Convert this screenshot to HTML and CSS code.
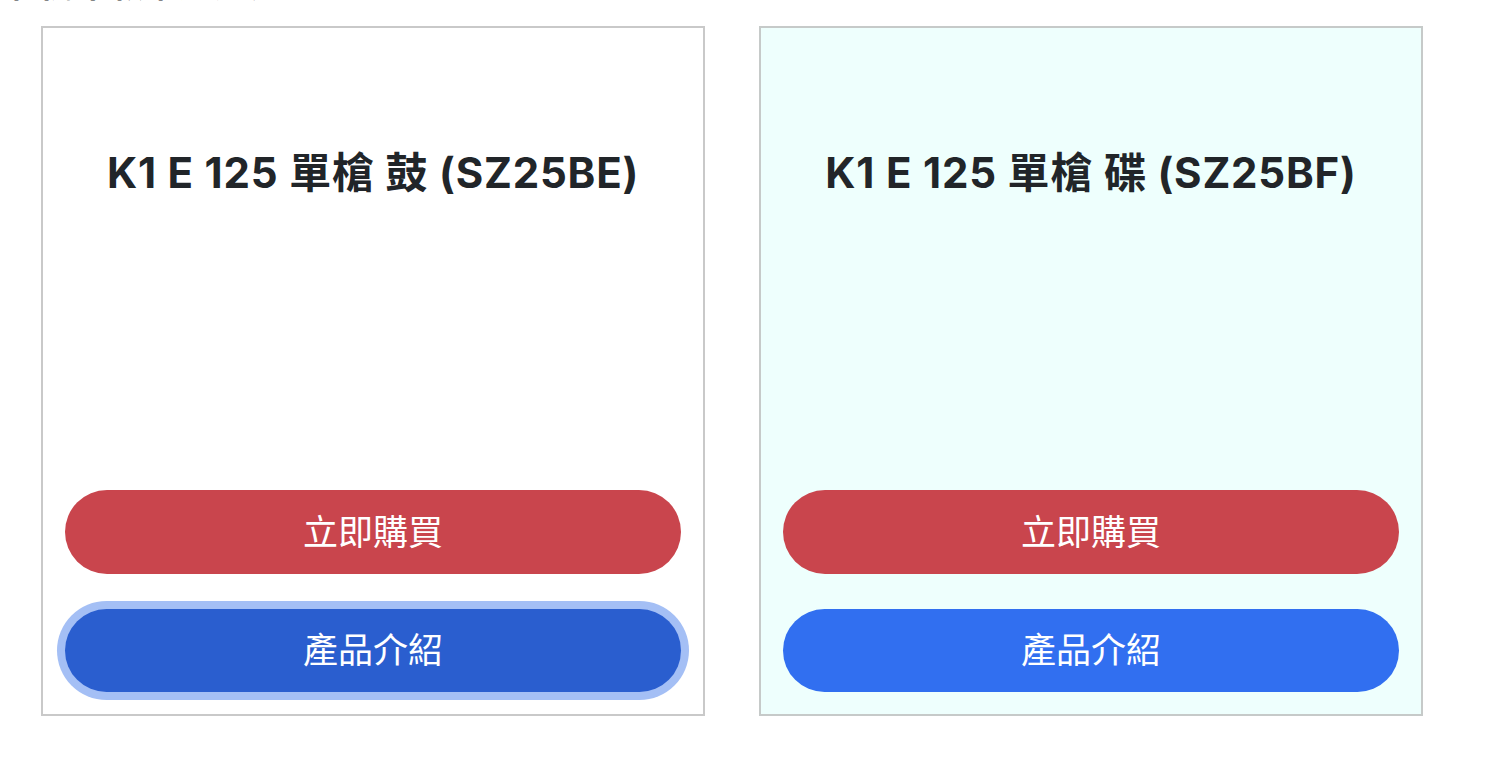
FILE: index.html
```html
<!DOCTYPE html>
<html lang="zh-Hant">
<head>
    <meta charset="UTF-8" />
    <meta name="viewport" content="width=device-width, initial-scale=1.0" />
    <title>K1 E 125</title>
    <link rel="stylesheet" href="styles.css">
</head>
<body>
    <h2 class="section-title">相關車款推薦列表</h2>
    <div class="product-grid">
        <div class="product-card">
            <h3 class="product-name">K1 E 125 單槍 鼓 (SZ25BE)</h3>
            <div class="product-actions">
                <button class="btn btn-buy">立即購買</button>
                <button class="btn btn-info focused">產品介紹</button>
            </div>
        </div>
        <div class="product-card highlight">
            <h3 class="product-name">K1 E 125 單槍 碟 (SZ25BF)</h3>
            <div class="product-actions">
                <button class="btn btn-buy">立即購買</button>
                <button class="btn btn-info">產品介紹</button>
            </div>
        </div>
    </div>
</body>
</html>
```

FILE: styles.css
```css
html, body {
    margin: 0;
    padding: 0;
    background: #fff;
    font-family: Inter, "Noto Sans CJK TC", sans-serif;
    color: #212529;
}

.section-title {
    margin: -36px 0 0 8px;
    font-size: 34px;
    line-height: 42px;
    font-weight: 700;
}

.product-grid {
    display: flex;
    gap: 54px;
    padding: 20px 0 0 41px;
}

.product-card {
    width: 660px;
    height: 686px;
    border: 2px solid #c9c9c9;
    background: #fff;
    display: flex;
    flex-direction: column;
    box-sizing: content-box;
}

.product-card.highlight {
    background: #eefffd;
    border-color: #c6cac9;
}

.product-name {
    margin: 119px 0 0;
    text-align: center;
    font-size: 42px;
    line-height: 52px;
    font-weight: 700;
    letter-spacing: 0.8px;
}

.product-actions {
    margin-top: auto;
    padding: 0 22px 22px;
    display: flex;
    flex-direction: column;
    gap: 35px;
}

.btn {
    height: 84px;
    padding: 0 0 6px;
    border: none;
    border-radius: 42px;
    color: #fff;
    font-family: Inter, "Noto Sans CJK TC", sans-serif;
    font-size: 35px;
    font-weight: 400;
    cursor: pointer;
}

.btn-buy {
    background: #c9454d;
}

.btn-info {
    height: 83px;
    background: #316ff0;
}

.btn-info.focused {
    background: #2a5ecf;
    box-shadow: 0 0 0 8px #a4bff5;
}
```
